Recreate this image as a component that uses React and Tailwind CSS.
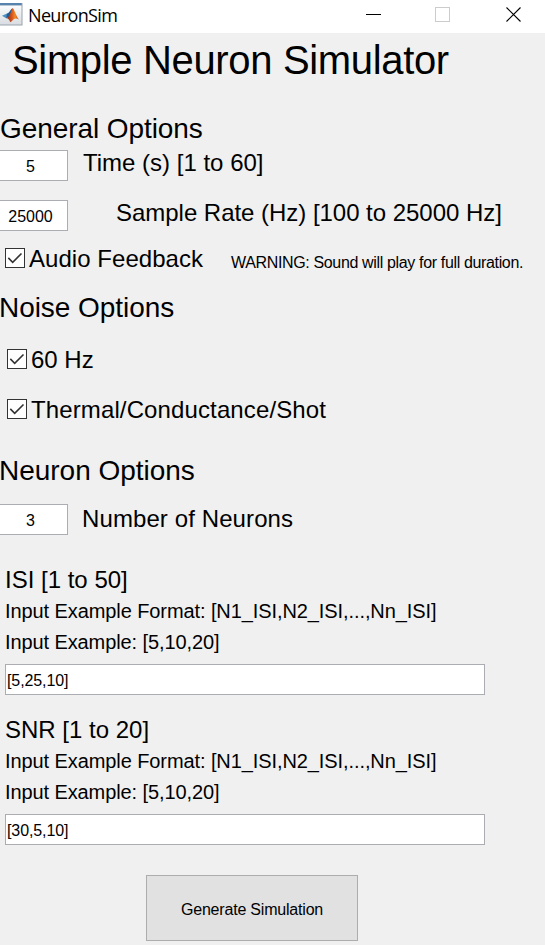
function MatlabIcon() {
  return (
    <svg width="23" height="26" viewBox="0 0 23 26" className="block shrink-0">
      <defs>
        <linearGradient id="frame" x1="0" y1="0" x2="0" y2="1">
          <stop offset="0" stopColor="#fafbfc" />
          <stop offset="1" stopColor="#d9dde2" />
        </linearGradient>
        <linearGradient id="peak" x1="0" y1="0" x2="1" y2="0">
          <stop offset="0" stopColor="#7a2418" />
          <stop offset="0.45" stopColor="#d9541e" />
          <stop offset="0.7" stopColor="#f08a24" />
          <stop offset="1" stopColor="#b8331a" />
        </linearGradient>
      </defs>
      <rect x="-1" y="3" width="23.5" height="22.5" fill="#9aa3ad" />
      <rect x="0" y="3" width="21.5" height="2.5" fill="#5583ad" />
      <rect x="0" y="5.500" width="21.5" height="19" fill="url(#frame)" />
      <path d="M2 15.8 L7 13.6 L9.2 15.6 L6.2 18.2 Z" fill="#4a90c4" />
      <path d="M7 13.6 C9.5 13 10 9.5 12.8 8 L10.2 17 L8 17.6 L6.2 18.2 Z" fill="#245a94" />
      <path d="M12.8 8 C14.5 9.5 16 16 19 19.6 C16.5 18 15 18.2 13.4 19.6 C12 21 11.4 22 10.2 22.3 C9.6 20 8.3 18 6.2 18.2 C10 17.5 11.2 10 12.8 8 Z" fill="url(#peak)" />
    </svg>
  );
}

function WindowControls() {
  return (
    <svg width="179" height="33" viewBox="0 0 179 33" className="ml-auto block shrink-0" fill="none">
      <path d="M0 14.5H15" stroke="#000" />
      <rect x="69.5" y="7.5" width="14" height="14" stroke="#ccc" />
      <path d="M140.500 7.500L154.500 21.500M154.500 7.500L140.500 21.500" stroke="#000" strokeWidth="1.1" />
    </svg>
  );
}

function Checkbox() {
  return (
    <svg width="20" height="20" viewBox="0 0 20 20" className="block shrink-0" fill="none">
      <rect x="0.5" y="0.5" width="19" height="19" fill="#fff" stroke="#333" />
      <path d="M3.300 9.900L7.700 14.300L16.500 5.500" stroke="#333" strokeWidth="1.6" />
    </svg>
  );
}

function NumberBox({ value }) {
  return (
    <div className="h-[31px] w-[68px] shrink-0 border border-l-0 border-[#abadb3] bg-white pr-[6px] text-center text-[16px] leading-[31px]">
      {value}
    </div>
  );
}

function VectorInput({ title, format, value }) {
  return (
    <div className="ml-[5px] w-[480px]">
      <div className="h-[31px] text-[24px] leading-[31px] whitespace-nowrap">{title}</div>
      <div className="h-[31px] text-[20px] leading-[33px] tracking-[-0.09px] whitespace-nowrap">{format}</div>
      <div className="h-[31px] text-[20px] leading-[33px] tracking-[-0.1px] whitespace-nowrap">Input Example: [5,10,20]</div>
      <div className="mt-[7px] h-[31px] border border-[#abadb3] bg-white pl-px text-[16px] leading-[31px] tracking-[-0.1px]">{value}</div>
    </div>
  );
}

export default function App() {
  return (
    <div className="h-[945px] w-[545px] overflow-hidden bg-[#f0f0f0] font-['Liberation_Sans',Arial,sans-serif] text-black">
      <header className="flex h-[33px] bg-white">
        <MatlabIcon />
        <span className="ml-[5px] font-['Open_Sans',sans-serif] text-[18px] leading-[31px] tracking-[-0.65px]">NeuronSim</span>
        <WindowControls />
      </header>

      <h1 className="ml-3 h-[54px] text-[40px] leading-[54px] tracking-[-0.34px] whitespace-nowrap">Simple Neuron Simulator</h1>

      <h2 className="mt-[25px] h-8 text-[28px] leading-[34px] tracking-[-0.08px]">General Options</h2>
      <div className="mt-[6px] flex">
        <NumberBox value="5" />
        <span className="ml-[15px] text-[24px] leading-[25px]">Time (s) [1 to 60]</span>
      </div>
      <div className="mt-[19px] flex">
        <NumberBox value="25000" />
        <span className="ml-[48px] text-[24px] leading-[25px] tracking-[-0.03px] whitespace-nowrap">Sample Rate (Hz) [100 to 25000 Hz]</span>
      </div>
      <div className="mt-[17px] ml-[5px] flex h-5">
        <Checkbox />
        <span className="ml-1 text-[24px] leading-[21px] tracking-[0.04px] whitespace-nowrap">Audio Feedback</span>
        <span className="ml-[28px] text-[16px] leading-[29px] tracking-[-0.35px] whitespace-nowrap">WARNING: Sound will play for full duration.</span>
      </div>

      <h2 className="mt-[23px] -ml-px h-8 text-[28px] leading-[34px] tracking-[-0.05px]">Noise Options</h2>
      <div className="mt-[26px] ml-[7px] flex h-5">
        <Checkbox />
        <span className="ml-1 text-[24px] leading-[21px]">60 Hz</span>
      </div>
      <div className="mt-[30px] ml-[7px] flex h-5">
        <Checkbox />
        <span className="ml-1 text-[24px] leading-[21px] tracking-[0.12px]">Thermal/Conductance/Shot</span>
      </div>

      <h2 className="mt-[35px] -ml-px h-8 text-[28px] leading-[34px] tracking-[-0.02px]">Neuron Options</h2>
      <div className="mt-[18px] flex">
        <NumberBox value="3" />
        <span className="ml-[14px] text-[24px] leading-[29px] tracking-[0.1px]">Number of Neurons</span>
      </div>

      <div className="mt-[29px] flex flex-col gap-[19px]">
        <VectorInput title="ISI [1 to 50]" format="Input Example Format: [N1_ISI,N2_ISI,...,Nn_ISI]" value="[5,25,10]" />
        <VectorInput title="SNR [1 to 20]" format="Input Example Format: [N1_ISI,N2_ISI,...,Nn_ISI]" value="[30,5,10]" />
      </div>

      <button className="mt-[30px] ml-[146px] block h-[66px] w-[212px] border border-[#adadad] bg-[#e1e1e1] pt-1 text-[16px] leading-[60px] tracking-[-0.2px]">
        Generate Simulation
      </button>
    </div>
  );
}
